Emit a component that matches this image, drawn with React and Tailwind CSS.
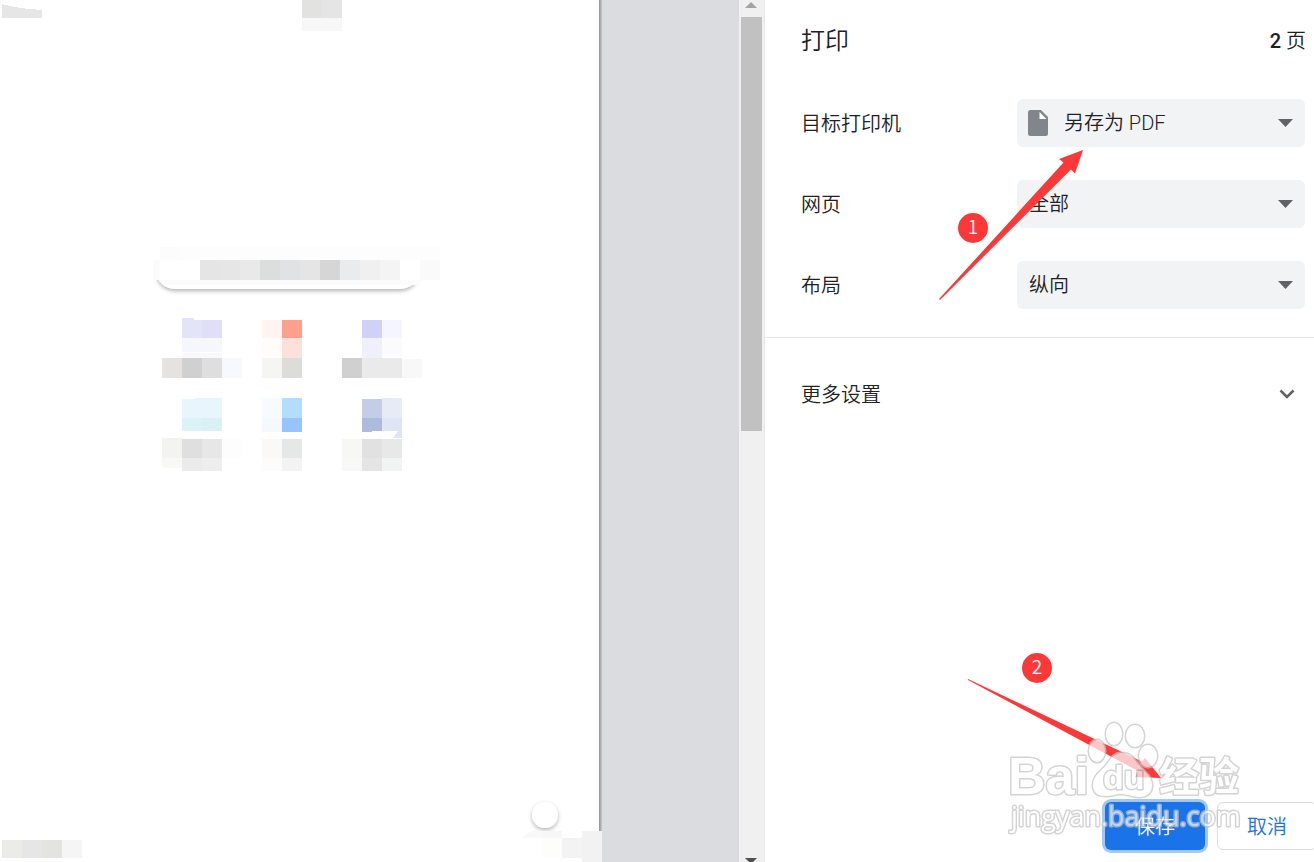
import React from 'react';

// [x, y, width, height, fill]
const HEADER_BLOCKS = [
  [302, 0, 20, 18, '#e2e2e1'],
  [322, 0, 20, 18, '#e5e5e5'],
  [302, 18, 40, 13, '#f7f7f7'],
];

const SEARCH_BLOCKS = [
  [160, 247, 20, 13, '#fcfcfc'],
  [180, 247, 260, 13, '#fdfdfd'],
  [153, 260, 7, 20, '#fbfbfb'],
  [200, 260, 20, 20, '#e5e5e5'],
  [220, 260, 20, 20, '#e6e6e6'],
  [240, 260, 20, 20, '#e9e9e9'],
  [260, 260, 20, 20, '#dcdedd'],
  [280, 260, 20, 20, '#e1e2e4'],
  [300, 260, 20, 20, '#e5e5e5'],
  [320, 260, 20, 20, '#d6d6d6'],
  [340, 260, 20, 20, '#eaebed'],
  [360, 260, 20, 20, '#f0f0f0'],
  [380, 260, 20, 20, '#f4f4f4'],
  [420, 260, 20, 20, '#fafafa'],
];

const TILE_BLOCKS = [
  [182, 318, 12, 2, '#e3e3f9'],
  [182, 320, 20, 18, '#e3e3f9'],
  [202, 320, 20, 18, '#dfe0f7'],
  [182, 338, 40, 14, '#f6f7fd'],
  [182, 353, 40, 5, '#f8f8fd'],
  [162, 358, 20, 20, '#e4e3e1'],
  [182, 358, 20, 20, '#d0d0d0'],
  [202, 358, 20, 20, '#dedede'],
  [222, 358, 20, 20, '#f8f9fd'],

  [262, 320, 20, 18, '#fff4f2'],
  [282, 320, 20, 18, '#fc9f8c'],
  [262, 338, 20, 20, '#fffcfb'],
  [282, 338, 20, 20, '#fee0da'],
  [262, 358, 20, 20, '#f5f5f4'],
  [282, 358, 20, 20, '#dcdcda'],

  [362, 320, 20, 18, '#cfd1f7'],
  [382, 320, 20, 18, '#f5f5ff'],
  [362, 338, 20, 20, '#f0f0fb'],
  [382, 338, 20, 18, '#fbfbfe'],
  [342, 358, 20, 20, '#d0d0d0'],
  [362, 358, 40, 20, '#eaeaea'],
  [402, 359, 20, 19, '#f8f8f8'],

  [182, 399, 20, 19, '#e8f6fb'],
  [194, 398, 28, 20, '#e7f6fc'],
  [182, 418, 20, 13, '#dbf2f7'],
  [202, 418, 20, 13, '#d8f1f7'],
  [162, 438, 20, 20, '#f3f3f1'],
  [182, 439, 20, 19, '#dfdfdf'],
  [202, 439, 20, 19, '#e7e7e7'],
  [222, 439, 20, 19, '#fdfdfd'],
  [162, 458, 20, 10, '#f8f8f6'],
  [182, 458, 20, 13, '#ebebeb'],
  [202, 458, 20, 13, '#eeeeee'],

  [262, 398, 20, 20, '#f7fbff'],
  [282, 398, 20, 20, '#b4dcfe'],
  [262, 418, 20, 14, '#f4f8ff'],
  [282, 418, 20, 14, '#97c3ff'],
  [262, 439, 20, 19, '#faf9f7'],
  [282, 439, 20, 19, '#e6e8e7'],
  [262, 458, 20, 13, '#fcfcfc'],
  [282, 458, 20, 13, '#f3f3f3'],

  [362, 399, 20, 19, '#c3cde6'],
  [382, 398, 20, 20, '#e7ebf5'],
  [362, 418, 20, 14, '#adbbdd'],
  [382, 418, 20, 20, '#e0e5f3'],
  [342, 439, 20, 19, '#f7f7f5'],
  [362, 439, 20, 19, '#e1e1e1'],
  [382, 439, 20, 19, '#e8e8e8'],
  [342, 458, 20, 13, '#f8f8f8'],
  [362, 458, 20, 13, '#e5e5e5'],
  [382, 458, 20, 13, '#f2f3f3'],
];

const FOOTER_BLOCKS = [
  [2, 840, 20, 18, '#ebebe9'],
  [22, 840, 20, 18, '#e6e6e6'],
  [42, 840, 20, 18, '#e3e3e1'],
  [62, 840, 20, 18, '#f5f5f5'],
  [542, 831, 20, 7, '#f7f7f7'],
  [542, 838, 20, 20, '#fdfdfa'],
  [562, 838, 20, 20, '#f3f3f3'],
  [582, 831, 20, 31, '#f2f2f2'],
];

const Blocks = ({ items }) => (
  <g shapeRendering="crispEdges">
    {items.map(([x, y, w, h, fill]) => (
      <rect key={`${x}-${y}`} x={x} y={y} width={w} height={h} fill={fill} />
    ))}
  </g>
);

const PagePreview = () => (
  <svg className="block h-full w-full" aria-hidden="true">
    <defs>
      <filter id="soft" x="-20%" y="-20%" width="140%" height="160%">
        <feDropShadow dx="0" dy="2" stdDeviation="2" floodColor="#000" floodOpacity="0.3" />
      </filter>
      <clipPath id="searchEdge">
        <rect x="150" y="280" width="280" height="20" />
      </clipPath>
      <linearGradient id="edge" x1="0" x2="1">
        <stop offset="0" stopColor="#909195" />
        <stop offset="1" stopColor="#c8c9cd" />
      </linearGradient>
    </defs>

    <path d="M2 18V4h1v1h5v1h5v1h5v1h7v1h11v1h6v8z" fill="#e6e6e6" />
    <Blocks items={HEADER_BLOCKS} />

    <g clipPath="url(#searchEdge)">
      <rect x="156" y="250" width="263" height="39" rx="19" fill="#fff" filter="url(#soft)" />
    </g>
    <path d="M160 280h260v5h-257z" fill="#fbfbfb" />
    <Blocks items={SEARCH_BLOCKS} />

    <Blocks items={TILE_BLOCKS} />
    <path d="M372 431h26l-5 7h-21z" fill="#fff" />
    <path d="M162 467l20 5h-20z" fill="#fff" />

    <rect x="599" y="0" width="3" height="831" fill="url(#edge)" />
    <circle cx="545" cy="815" r="13" fill="#fff" filter="url(#soft)" />
    <path d="M522 838q6-7 12-7h8v7z" fill="#f9f9f9" />
    <Blocks items={FOOTER_BLOCKS} />
  </svg>
);

const ScrollBar = () => (
  <div className="flex w-[25px] shrink-0 flex-col items-center overflow-hidden bg-[#f0f0f0] pr-[1px]">
    <svg className="h-[17px] w-3 shrink-0" viewBox="0 0 12 17" aria-hidden="true">
      <path d="M0 8l6-6 6 6z" fill="#a3a3a3" />
    </svg>
    <div className="h-[48%] w-[21px] bg-[#c1c1c1]" />
    <svg className="mt-auto h-1 w-3 shrink-0" viewBox="0 0 12 4" aria-hidden="true">
      <path d="M0 0h12L8 4H4z" fill="#505050" />
    </svg>
  </div>
);

const FileIcon = () => (
  <svg className="pointer-events-none absolute top-[11px] left-[11px] h-[26px] w-5" viewBox="0 0 20 26" aria-hidden="true">
    <path d="M2.500 0H13l7 7v16.500a2.500 2.500 0 0 1-2.500 2.500h-15A2.500 2.500 0 0 1 0 23.500v-21A2.500 2.500 0 0 1 2.500 0z" fill="#80868b" />
    <path d="M11.500 2v7H18.500z" fill="#fff" />
  </svg>
);

const SettingRow = ({ id, label, value, icon }) => (
  <div className="flex h-12 items-center justify-between">
    <label htmlFor={id} className="pt-[2px]">{label}</label>
    <div className="relative w-72">
      <select
        id={id}
        className={`h-12 w-full appearance-none rounded-md bg-[#f1f3f4] pr-10 outline-none ${icon ? 'pl-[47px]' : 'pl-3'}`}
      >
        <option>{value}</option>
      </select>
      {icon}
      <svg className="pointer-events-none absolute top-5 right-3 h-2 w-[15px]" viewBox="0 0 15 8" aria-hidden="true">
        <path d="M0 0h15L7.5 8z" fill="#5f6368" />
      </svg>
    </div>
  </div>
);

const Marker = ({ x, y, children }) => (
  <g>
    <circle cx={x} cy={y} r="15" fill="#fc3838" />
    <text x={x} y={y + 6} textAnchor="middle" fontSize="19" fill="#fff" fontFamily="'Noto Sans CJK SC', sans-serif">
      {children}
    </text>
  </g>
);

const Watermark = () => (
  <g fill="#fff" stroke="#c4c4c4" strokeWidth="3" paintOrder="stroke" strokeLinejoin="round" opacity="0.72">
    <ellipse cx="1097" cy="751" rx="8" ry="11" />
    <ellipse cx="1114" cy="734" rx="8" ry="11" />
    <ellipse cx="1135" cy="736" rx="9" ry="11" />
    <ellipse cx="1148" cy="756" rx="9" ry="11" />
    <path d="M1122 753c-8 0-11 5-15 11-5 7-14 11-14 21 0 8 5 11 13 11 6 0 10-2 16-2s11 3 17 3c8 0 13-4 13-12 0-9-8-13-13-20-5-6-8-12-17-12z" />
    <text x="1008" y="794" fontSize="52" fontWeight="700" fontFamily="'Liberation Sans', sans-serif">Bai</text>
    <text x="1103" y="789" fontSize="34" fontWeight="700" fontFamily="'Liberation Sans', sans-serif">du</text>
    <text x="1159" y="791" fontSize="40" fontWeight="700" fontFamily="'Noto Sans CJK SC', sans-serif">经验</text>
    <text x="1011" y="826" fontSize="27" fontWeight="500" fontFamily="'Open Sans', sans-serif">jingyan.baidu.com</text>
  </g>
);

const Annotations = () => (
  <svg className="pointer-events-none absolute inset-0 h-full w-full">
    <g fill="#fc3838">
      <path d="M939 299L1063.500 162.500 1059 159 1083 150 1075 173.500 1071 169.500 940 300z" />
      <path d="M968 679L1142 761.500 1145 758 1161 778 1135 777 1138 771 968 680z" />
    </g>
    <Marker x={973} y={228}>1</Marker>
    <Marker x={1037} y={668}>2</Marker>
    <Watermark />
  </svg>
);

const App = () => {
  return (
    <div className="relative flex h-screen overflow-hidden bg-white font-[Roboto,'Noto_Sans_CJK_SC',sans-serif] text-xl font-[350] text-[#202124]">
      <main className="flex min-w-0 flex-1 bg-[#dadce0]">
        <div className="min-w-0 flex-1 bg-white">
          <PagePreview />
        </div>
        <div className="w-[137px] shrink-0" />
        <ScrollBar />
      </main>

      <aside className="flex w-[550px] shrink-0 flex-col border-l border-[#e8e8e8]">
        <header className="flex h-20 shrink-0 items-center justify-between pt-[2px] pr-2 pl-9">
          <h1 className="text-2xl font-[350]">打印</h1>
          <span className="font-medium">
            2 <span className="font-[350]">页</span>
          </span>
        </header>

        <section className="flex flex-col gap-[33px] border-b border-[#e8eaed] pt-[19px] pr-[9px] pb-7 pl-9">
          <SettingRow id="destination" label="目标打印机" value="另存为 PDF" icon={<FileIcon />} />
          <SettingRow id="pages" label="网页" value="全部" />
          <SettingRow id="layout" label="布局" value="纵向" />
        </section>

        <button type="button" className="flex h-28 w-full items-center justify-between pr-[19px] pl-9 text-left">
          <span className="pt-[2px]">更多设置</span>
          <svg className="h-[10px] w-4" viewBox="0 0 16 10" fill="none" stroke="#5f6368" strokeWidth="2.500" aria-hidden="true">
            <path d="M1.500 1.500L8 8l6.500-6.500" />
          </svg>
        </button>

        <footer className="mt-auto -mr-[3px] flex justify-end gap-3 pb-3">
          <button type="button" className="h-12 w-[100px] rounded-md bg-[#1a73e8] pt-[2px] text-white ring-3 ring-[#a3c7f6]">
            保存
          </button>
          <button type="button" className="h-12 w-[100px] rounded-md border border-[#dadce0] pt-[2px] text-[#1a73e8]">
            取消
          </button>
        </footer>
      </aside>

      <Annotations />
    </div>
  );
};

export default App;
